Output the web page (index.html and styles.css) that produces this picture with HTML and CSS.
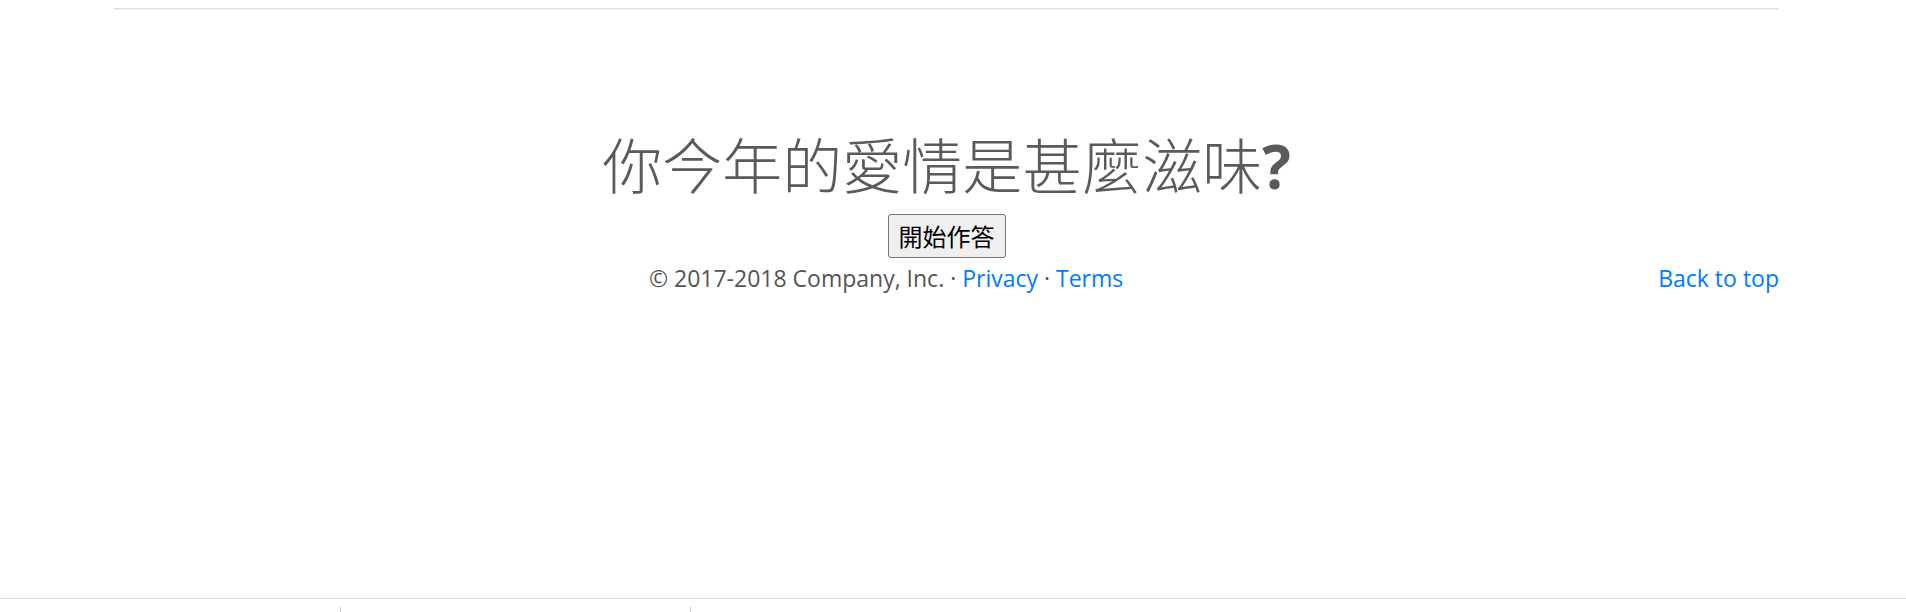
FILE: index.html
```html
<!DOCTYPE html>
<html lang="zh-Hant">
<head>
<meta charset="utf-8">
<title>你今年的愛情是甚麼滋味?</title>
<link rel="stylesheet" href="styles.css">
</head>
<body>
<div class="page">
  <div class="container">
    <hr class="rule">
    <main class="hero">
      <h1 class="title">你今年的愛情是甚麼滋味<span class="qmark">?</span></h1>
      <button class="start" type="button">開始作答</button>
    </main>
    <footer class="footer">
      <p class="copy">© 2017-2018 Company, Inc. · <a href="#">Privacy</a> · <a href="#">Terms</a></p>
      <p class="totop"><a href="#">Back to top</a></p>
    </footer>
  </div>
  <div class="strip">
    <span class="cell first"></span>
    <span class="cell mid"></span>
    <span class="cell last"></span>
  </div>
</div>
</body>
</html>
```

FILE: styles.css
```css
html, body {
  margin: 0;
  padding: 0;
  background: #fff;
}
body {
  font-family: "Open Sans", "Noto Sans CJK TC", sans-serif;
  color: #555;
}
.page {
  height: 612px;
  display: flex;
  flex-direction: column;
  overflow: hidden;
}
.container {
  width: 1665px;
  margin-left: 114px;
}
.rule {
  margin: 8px 0 0;
  border: 0;
  border-top: 1px solid #e0e0e0;
  border-bottom: 1px solid #f0f0f0;
  height: 0;
}
.hero {
  display: flex;
  flex-direction: column;
  align-items: center;
  padding-top: 118px;
}
.title {
  margin: 0;
  font-family: "Noto Sans CJK TC", sans-serif;
  font-weight: 300;
  font-size: 60px;
  line-height: 70px;
  color: #5a5a5a;
}
.qmark {
  font-family: "Open Sans", sans-serif;
  font-weight: 700;
}
.start {
  margin-top: 13px;
  font-family: "Noto Sans CJK TC", sans-serif;
  font-size: 24px;
  line-height: 36px;
  height: 44px;
  padding: 0 10px;
  color: #000;
  background: #efefef;
  border: 1px solid #767676;
  border-radius: 3px;
}
.footer {
  display: flex;
  align-items: baseline;
  font-size: 23px;
  line-height: 36px;
  padding-top: 2px;
}
.footer p {
  margin: 0;
}
.copy {
  flex: 1;
  text-align: center;
}
a {
  color: #007bff;
  text-decoration: none;
}
.strip {
  margin-top: auto;
  height: 13px;
  border-top: 1px solid #d9d9d9;
  display: flex;
}
.cell {
  margin-top: 8px;
  height: 5px;
}
.first {
  width: 340px;
}
.mid {
  width: 349px;
  border-left: 1px solid #c8c8c8;
}
.last {
  flex: 1;
  border-left: 1px solid #c8c8c8;
}
```
